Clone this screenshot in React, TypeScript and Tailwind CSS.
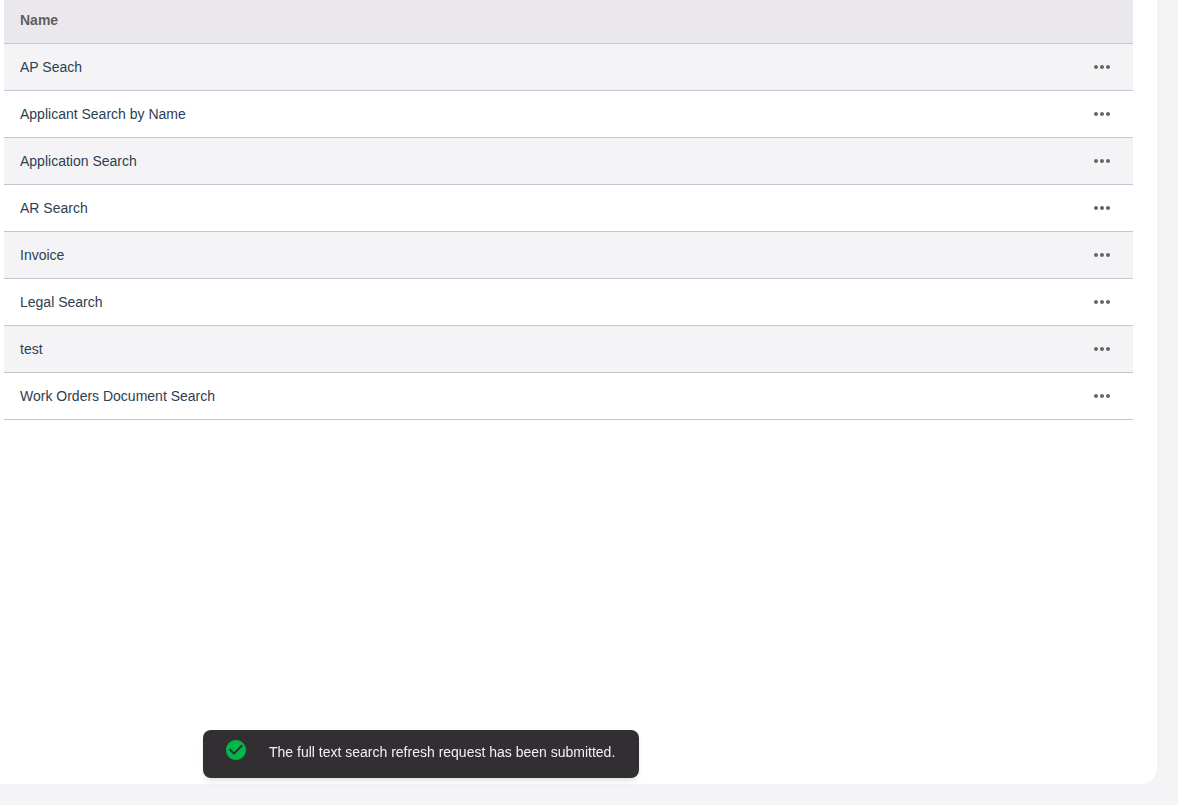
import { MdCheckCircle, MdMoreHoriz } from "react-icons/md";

const searches = [
  { _id: "1", name: "AP Seach" },
  { _id: "2", name: "Applicant Search by Name" },
  { _id: "3", name: "Application Search" },
  { _id: "4", name: "AR Search" },
  { _id: "5", name: "Invoice" },
  { _id: "6", name: "Legal Search" },
  { _id: "7", name: "test" },
  { _id: "8", name: "Work Orders Document Search" },
];

const SearchTable = () => (
  <table className="w-full border-collapse text-left text-sm">
    <thead>
      <tr className="h-[43px] border-b border-[#c9c5d0] bg-[#ebe8ed]">
        <th scope="col" className="px-4 pb-0.5 font-bold text-[#605d62]">
          Name
        </th>
        <th scope="col" aria-label="Actions" className="w-16" />
      </tr>
    </thead>
    <tbody>
      {searches.map((search) => (
        <tr
          key={search._id}
          className="h-[47px] border-b border-[#c9c5d0] odd:bg-[#f4f4f7]"
        >
          <td className="px-4 text-[#2c3e50]">{search.name}</td>
          <td className="w-16 pr-[19px] text-right">
            <button
              type="button"
              aria-label={`Actions for ${search.name}`}
              className="inline-flex align-middle text-[#666666]"
            >
              <MdMoreHoriz size={24} />
            </button>
          </td>
        </tr>
      ))}
    </tbody>
  </table>
);

const Toast = ({ message }: { message: string }) => (
  <div
    role="status"
    className="fixed bottom-[27px] left-[203px] flex h-12 items-center gap-[21px] rounded-lg bg-[#322f33] pr-6 pl-[21px] text-sm text-[#f4eff4] shadow-md"
  >
    <MdCheckCircle size={24} className="mb-2 shrink-0 text-[#00b74a]" />
    <p className="pb-1">{message}</p>
  </div>
);

export default function App() {
  return (
    <div className="flex min-h-screen bg-[#f4f4f7] pr-[21px] pb-[21px] font-['Liberation_Sans',Arial,sans-serif]">
      <main className="flex-1 rounded-br-2xl bg-white pr-6 pl-1">
        <SearchTable />
      </main>
      <Toast message="The full text search refresh request has been submitted." />
    </div>
  );
}
